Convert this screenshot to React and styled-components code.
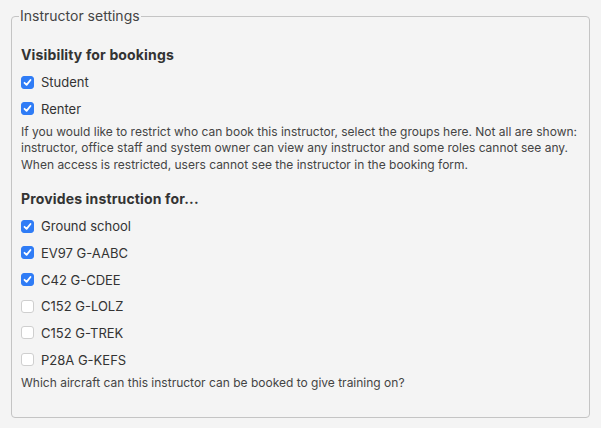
import React from 'react';
import styled, { createGlobalStyle } from 'styled-components';

const GlobalStyle = createGlobalStyle`
  html, body {
    margin: 0;
    padding: 0;
    background: #f4f4f4;
  }
  body {
    font-family: Inter, "Liberation Sans", Arial, sans-serif;
    color: #333;
  }
`;

const Page = styled.div`
  padding: 7px 11px 11px 11px;
`;

const Fieldset = styled.fieldset`
  margin: 0;
  padding: 4px 9px 26px 9px;
  border: 1px solid #c4c4c4;
  border-radius: 4px;
`;

const Legend = styled.legend`
  padding: 0 1px;
  margin-left: -2px;
  font-size: 14px;
  color: #444;
  line-height: 18px;
`;

const Heading = styled.h3`
  margin: ${p => p.$top}px 0 0 0;
  font-size: 14px;
  font-weight: 700;
  color: #333;
  line-height: 20px;
  letter-spacing: 0.15px;
`;

const List = styled.div`
  display: flex;
  flex-direction: column;
  gap: 8.7px;
  margin-top: ${p => p.$top}px;
`;

const Row = styled.label`
  display: flex;
  align-items: center;
  gap: 7px;
  height: 18px;
  font-size: 13px;
  color: #333;
`;

const Box = styled.span`
  box-sizing: border-box;
  width: 13px;
  height: 13px;
  border-radius: 3px;
  display: flex;
  align-items: center;
  justify-content: center;
  background: ${p => (p.$checked ? '#2f7cf6' : '#fff')};
  border: 1px solid ${p => (p.$checked ? '#2f7cf6' : '#cfcfcf')};
`;

const Help = styled.p`
  margin: ${p => p.$top}px 0 0 0;
  font-size: 12px;
  line-height: 16.5px;
  color: #444;
  white-space: nowrap;
`;

const Check = ({ checked, label }) => (
  <Row>
    <Box $checked={checked}>
      {checked && (
        <svg width="9" height="9" viewBox="0 0 9 9">
          <path d="M1.5 4.8 L3.6 6.9 L7.5 2" fill="none" stroke="#fff" strokeWidth="1.8" strokeLinecap="round" strokeLinejoin="round" />
        </svg>
      )}
    </Box>
    {label}
  </Row>
);

const visibility = [
  { label: 'Student', checked: true },
  { label: 'Renter', checked: true },
];

const aircraft = [
  { label: 'Ground school', checked: true },
  { label: 'EV97 G-AABC', checked: true },
  { label: 'C42 G-CDEE', checked: true },
  { label: 'C152 G-LOLZ', checked: false },
  { label: 'C152 G-TREK', checked: false },
  { label: 'P28A G-KEFS', checked: false },
];

export default function App() {
  return (
    <Page>
      <GlobalStyle />
      <Fieldset>
        <Legend>Instructor settings</Legend>
        <Heading $top={16}>Visibility for bookings</Heading>
        <List $top={8}>
          {visibility.map(v => <Check key={v.label} {...v} />)}
        </List>
        <Help $top={6}>
          If you would like to restrict who can book this instructor, select the groups here. Not all are shown:
          <br />
          instructor, office staff and system owner can view any instructor and some roles cannot see any.
          <br />
          When access is restricted, users cannot see the instructor in the booking form.
        </Help>
        <Heading $top={16}>Provides instruction for...</Heading>
        <List $top={8}>
          {aircraft.map(a => <Check key={a.label} {...a} />)}
        </List>
        <Help $top={6}>Which aircraft can this instructor can be booked to give training on?</Help>
      </Fieldset>
    </Page>
  );
}
